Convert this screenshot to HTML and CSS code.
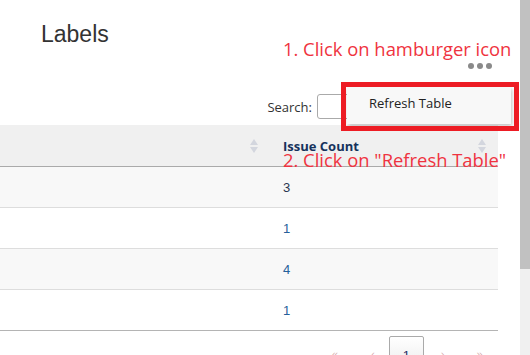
FILE: index.html
```html
<!DOCTYPE html>
<html lang="en">
<head>
  <meta charset="UTF-8" />
  <title>Labels</title>
  <link rel="stylesheet" href="styles.css">
</head>
<body>
  <div class="page">
    <div class="main">
      <div class="title">
        <h1>Labels</h1>
      </div>

      <div class="tools">
        <span class="dot"></span><span class="dot"></span><span class="dot"></span>
      </div>

      <div class="search">
        <label for="q">Search:</label>
        <input type="text" id="q" />
      </div>

      <table class="grid">
        <thead>
          <tr>
            <th class="col-name"><span class="sort"><svg width="8" height="15" viewBox="0 0 8 15"><path d="M4 0 L8 6 L0 6 Z" fill="#d3d6de"/><path d="M0 8 L8 8 L4 14 Z" fill="#d3d6de"/></svg></span></th>
            <th class="col-count">Issue Count<span class="sort"><svg width="8" height="15" viewBox="0 0 8 15"><path d="M4 0 L8 6 L0 6 Z" fill="#d3d6de"/><path d="M0 8 L8 8 L4 14 Z" fill="#d3d6de"/></svg></span></th>
          </tr>
        </thead>
        <tbody>
          <tr class="odd"><td></td><td class="num dark">3</td></tr>
          <tr><td></td><td class="num">1</td></tr>
          <tr class="odd"><td></td><td class="num">4</td></tr>
          <tr class="last"><td></td><td class="num">1</td></tr>
        </tbody>
      </table>

      <div class="pager">
        <span class="arrow first">&laquo;</span>
        <span class="arrow prev">&lsaquo;</span>
        <span class="current">1</span>
        <span class="arrow next">&rsaquo;</span>
        <span class="arrow last-page">&raquo;</span>
      </div>

      <!-- dropdown opened from the dots -->
      <div class="menu">Refresh Table</div>

      <!-- help annotations drawn over the screen -->
      <div class="note note-1">1. Click on hamburger icon</div>
      <div class="note note-2">2. Click on "Refresh Table"</div>
      <div class="highlight"></div>
    </div>

    <div class="scrollbar">
      <div class="thumb"></div>
    </div>
  </div>
</body>
</html>
```

FILE: styles.css
```css
html, body {
  margin: 0;
  height: 355px;
  overflow: hidden;
  background: #fff;
}
body {
  font-family: 'Liberation Sans', Arial, sans-serif;
  color: #333;
}
.page {
  display: flex;
  height: 355px;
}
.main {
  position: relative;
  width: 520px;
}
.title {
  padding: 20px 0 0 41px;
}
.title h1 {
  margin: 0;
  font-size: 23px;
  line-height: 28px;
  font-weight: normal;
  color: #333;
}
.tools {
  display: flex;
  justify-content: flex-end;
  gap: 3px;
  margin-top: 15px;
  padding-right: 28px;
}
.dot {
  width: 6px;
  height: 6px;
  border-radius: 50%;
  background: #8a8a8a;
}
.search {
  display: flex;
  justify-content: flex-end;
  align-items: center;
  gap: 4px;
  margin-top: 25px;
  width: 498px;
  font-family: 'Open Sans', sans-serif;
  font-size: 13px;
}
.search label {
  margin-right: 1px;
}
.search input {
  width: 181px;
  height: 25px;
  box-sizing: border-box;
  border: 1px solid #aaa;
  border-radius: 3px;
  margin: 0;
}
.grid {
  width: 498px;
  margin-top: 6px;
  border-collapse: collapse;
}
.grid th {
  height: 41px;
  padding: 0;
  background: #f0f0f0;
  border-bottom: 1px solid #aaa;
  text-align: left;
  font-family: 'Open Sans', sans-serif;
  font-size: 13px;
  font-weight: bold;
  color: #16325c;
  position: relative;
}
.col-name {
  width: 270px;
}
.col-count {
  padding-left: 13px !important;
}
.sort {
  position: absolute;
  right: 12px;
  top: 14px;
  line-height: 0;
}
.grid td {
  height: 40px;
  padding: 0;
  border-bottom: 1px solid #ddd;
  font-size: 13px;
}
.grid tr.odd td {
  background: #f8f8f8;
}
.grid tr.last td {
  border-bottom-color: #b4b4b4;
}
.num {
  padding-left: 13px !important;
  color: #25609a;
}
.num.dark {
  color: #2b3550;
}
.pager {
  display: flex;
  align-items: flex-start;
  margin-top: 5px;
  padding-left: 332px;
  font-size: 13px;
}
.arrow {
  color: #d4a8a8;
  padding-top: 12px;
  font-size: 11px;
}
.prev { margin-left: 33px; }
.current {
  margin-left: 14px;
  width: 35px;
  height: 30px;
  box-sizing: border-box;
  border: 1px solid #aaa;
  border-radius: 2px;
  text-align: center;
  padding-top: 11px;
  color: #2a2f66;
  background: linear-gradient(#fff, #eee);
}
.next { margin-left: 17px; }
.last-page { margin-left: 32px; }

.menu {
  position: absolute;
  left: 347px;
  top: 87px;
  width: 164px;
  height: 37px;
  box-sizing: border-box;
  padding: 7px 0 0 22px;
  background: #f8f8f8;
  box-shadow: 1px 2px 4px rgba(0, 0, 0, 0.25);
  font-family: 'Open Sans', sans-serif;
  font-size: 13px;
  color: #222;
}
.note {
  position: absolute;
  left: 283px;
  font-family: 'Open Sans', sans-serif;
  font-size: 18.4px;
  line-height: 22px;
  color: #ef3340;
  white-space: nowrap;
}
.note-1 { top: 38px; }
.note-2 { top: 149px; }
.highlight {
  position: absolute;
  left: 341px;
  top: 82px;
  width: 178px;
  height: 49px;
  box-sizing: border-box;
  border: 5px solid #ed1c24;
}
.scrollbar {
  width: 10px;
  background: #f0f0f0;
}
.thumb {
  height: 269px;
  background: #c1c1c1;
}
```
